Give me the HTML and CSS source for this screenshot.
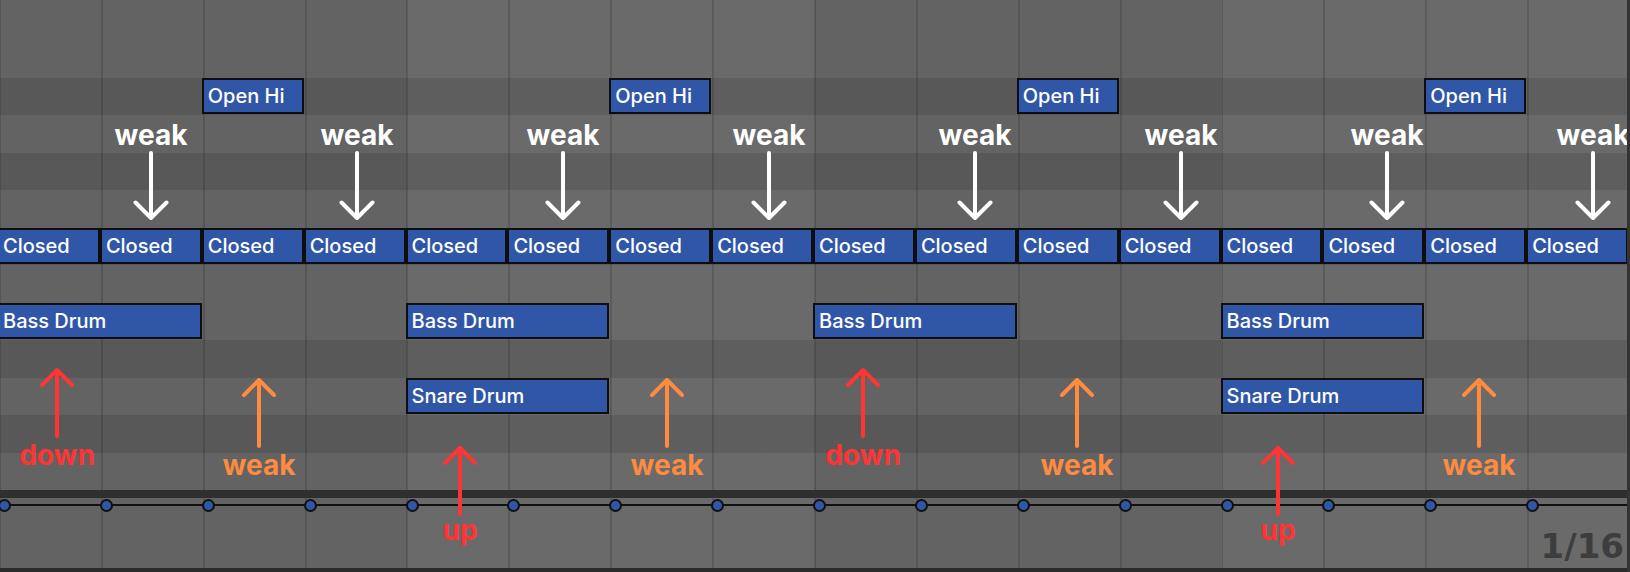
FILE: index.html
```html
<!DOCTYPE html>
<html lang="en">
<head>
<meta charset="utf-8">
<title>Drum pattern – piano roll</title>
<link rel="stylesheet" href="styles.css">
</head>
<body>
<div class="roll">
  <div class="lanes">
    <div class="note r-open gc3">Open Hi</div>
    <div class="note r-open gc7">Open Hi</div>
    <div class="note r-open gc11">Open Hi</div>
    <div class="note r-open gc15">Open Hi</div>

    <div class="note r-bass gc1 span2 cut">Bass Drum</div>
    <div class="note r-bass gc5 span2">Bass Drum</div>
    <div class="note r-bass gc9 span2">Bass Drum</div>
    <div class="note r-bass gc13 span2">Bass Drum</div>

    <div class="note r-snare gc5 span2">Snare Drum</div>
    <div class="note r-snare gc13 span2">Snare Drum</div>

    <div class="note r-closed cut">Closed</div>
    <div class="note r-closed">Closed</div>
    <div class="note r-closed">Closed</div>
    <div class="note r-closed">Closed</div>
    <div class="note r-closed">Closed</div>
    <div class="note r-closed">Closed</div>
    <div class="note r-closed">Closed</div>
    <div class="note r-closed">Closed</div>
    <div class="note r-closed">Closed</div>
    <div class="note r-closed">Closed</div>
    <div class="note r-closed">Closed</div>
    <div class="note r-closed">Closed</div>
    <div class="note r-closed">Closed</div>
    <div class="note r-closed">Closed</div>
    <div class="note r-closed">Closed</div>
    <div class="note r-closed">Closed</div>
  </div>

  <div class="timebar"></div>

  <div class="ruler">
    <div class="tick"><span class="dot"></span></div>
    <div class="tick"><span class="dot"></span></div>
    <div class="tick"><span class="dot"></span></div>
    <div class="tick"><span class="dot"></span></div>
    <div class="tick"><span class="dot"></span></div>
    <div class="tick"><span class="dot"></span></div>
    <div class="tick"><span class="dot"></span></div>
    <div class="tick"><span class="dot"></span></div>
    <div class="tick"><span class="dot"></span></div>
    <div class="tick"><span class="dot"></span></div>
    <div class="tick"><span class="dot"></span></div>
    <div class="tick"><span class="dot"></span></div>
    <div class="tick"><span class="dot"></span></div>
    <div class="tick"><span class="dot"></span></div>
    <div class="tick"><span class="dot"></span></div>
    <div class="tick"><span class="dot"></span></div>
  </div>

  <!-- annotations: white "weak" on the off-beat eighths -->
  <div class="weak-row">
    <div class="ann white"><span class="lbl">weak</span><svg viewBox="0 0 36 70"><path d="M18 2V67M2.5 51.5L18 67L33.5 51.5"/></svg></div>
    <div class="ann white"><span class="lbl">weak</span><svg viewBox="0 0 36 70"><path d="M18 2V67M2.5 51.5L18 67L33.5 51.5"/></svg></div>
    <div class="ann white"><span class="lbl">weak</span><svg viewBox="0 0 36 70"><path d="M18 2V67M2.5 51.5L18 67L33.5 51.5"/></svg></div>
    <div class="ann white"><span class="lbl">weak</span><svg viewBox="0 0 36 70"><path d="M18 2V67M2.5 51.5L18 67L33.5 51.5"/></svg></div>
    <div class="ann white"><span class="lbl">weak</span><svg viewBox="0 0 36 70"><path d="M18 2V67M2.5 51.5L18 67L33.5 51.5"/></svg></div>
    <div class="ann white"><span class="lbl">weak</span><svg viewBox="0 0 36 70"><path d="M18 2V67M2.5 51.5L18 67L33.5 51.5"/></svg></div>
    <div class="ann white"><span class="lbl">weak</span><svg viewBox="0 0 36 70"><path d="M18 2V67M2.5 51.5L18 67L33.5 51.5"/></svg></div>
    <div class="ann white"><span class="lbl">weak</span><svg viewBox="0 0 36 70"><path d="M18 2V67M2.5 51.5L18 67L33.5 51.5"/></svg></div>
  </div>

  <!-- annotations: beat accents -->
  <div class="beat red down1"><svg viewBox="0 0 36 70"><path d="M18 68V2M3 17L18 2L33 17"/></svg><span class="lbl">down</span></div>
  <div class="beat orange wk1"><svg viewBox="0 0 36 70"><path d="M18 68V2M3 17L18 2L33 17"/></svg><span class="lbl">weak</span></div>
  <div class="beat red up up1"><svg viewBox="0 0 36 70"><path d="M18 68V2M3 17L18 2L33 17"/></svg><span class="lbl">up</span></div>
  <div class="beat orange wk2"><svg viewBox="0 0 36 70"><path d="M18 68V2M3 17L18 2L33 17"/></svg><span class="lbl">weak</span></div>
  <div class="beat red down2"><svg viewBox="0 0 36 70"><path d="M18 68V2M3 17L18 2L33 17"/></svg><span class="lbl">down</span></div>
  <div class="beat orange wk3"><svg viewBox="0 0 36 70"><path d="M18 68V2M3 17L18 2L33 17"/></svg><span class="lbl">weak</span></div>
  <div class="beat red up up2"><svg viewBox="0 0 36 70"><path d="M18 68V2M3 17L18 2L33 17"/></svg><span class="lbl">up</span></div>
  <div class="beat orange wk4"><svg viewBox="0 0 36 70"><path d="M18 68V2M3 17L18 2L33 17"/></svg><span class="lbl">weak</span></div>

  <div class="grid-label">1/16</div>
</div>
</body>
</html>
```

FILE: styles.css
```css
html, body {
  margin: 0;
  padding: 0;
  background: #2a2a2a;
}

.roll {
  position: relative;
  width: 1630px;
  height: 572px;
  overflow: hidden;
  display: flex;
  flex-direction: column;
  background: #2a2a2a;
  font-family: Inter, "Liberation Sans", sans-serif;
}

.roll::after {
  content: "";
  position: absolute;
  top: 0;
  right: 0;
  width: 3px;
  height: 100%;
  background: #333333;
}

/* ---------- note lanes ---------- */
.lanes {
  height: 490px;
  flex: none;
  display: grid;
  grid-template-columns: repeat(16, 1fr);
  grid-template-rows: 40px repeat(12, 37.5px);
  background:
    linear-gradient(to bottom,
      transparent 0 77.5px,
      rgba(0,0,0,.11) 77.5px 115px,
      transparent 115px 152.5px,
      rgba(0,0,0,.11) 152.5px 190px,
      transparent 190px 227.5px,
      rgba(0,0,0,.11) 227.5px 265px,
      transparent 265px 340px,
      rgba(0,0,0,.11) 340px 377.5px,
      transparent 377.5px 415px,
      rgba(0,0,0,.11) 415px 452.5px,
      transparent 452.5px),
    repeating-linear-gradient(to right,
      rgba(0,0,0,.14) 0 1px,
      transparent 1px 100.875px,
      rgba(0,0,0,.14) 100.875px 101.875px),
    linear-gradient(to right,
      #636363 0 25%,
      #6a6a6a 25% 50%,
      #636363 50% 75%,
      #6a6a6a 75% 100%);
}

.note {
  box-sizing: border-box;
  height: 36px;
  align-self: start;
  margin: 0 2px 0 -2px;
  border: 2px solid #0e0e0e;
  background: #3056a8;
  color: #ffffff;
  font-size: 20px;
  font-weight: 500;
  display: flex;
  align-items: center;
  padding-left: 4px;
  white-space: nowrap;
  overflow: hidden;
}

.note.cut {
  border-left: 0;
  padding-left: 5px;
}

.r-open   { grid-row: 3; }
.r-closed { grid-row: 7; }
.r-bass   { grid-row: 9; }
.r-snare  { grid-row: 11; }

.gc1  { grid-column-start: 1; }
.gc3  { grid-column-start: 3; }
.gc5  { grid-column-start: 5; }
.gc7  { grid-column-start: 7; }
.gc9  { grid-column-start: 9; }
.gc11 { grid-column-start: 11; }
.gc13 { grid-column-start: 13; }
.gc15 { grid-column-start: 15; }
.span2 { grid-column-end: span 2; }

/* ---------- timeline ---------- */
.timebar {
  height: 8px;
  flex: none;
  background: #2f2f2f;
}

.ruler {
  height: 70px;
  flex: none;
  display: flex;
  background:
    linear-gradient(to bottom, transparent 0 6.5px, #111111 6.5px 8.5px, transparent 8.5px),
    repeating-linear-gradient(to right,
      rgba(0,0,0,.14) 0 1px,
      transparent 1px 100.875px,
      rgba(0,0,0,.14) 100.875px 101.875px),
    linear-gradient(to right,
      #636363 0 25%,
      #6a6a6a 25% 50%,
      #636363 50% 75%,
      #6a6a6a 75% 100%);
}

.tick {
  flex: 1;
}

.dot {
  display: block;
  box-sizing: border-box;
  width: 13px;
  height: 13px;
  margin: 1px 0 0 -2px;
  border: 2px solid #111111;
  border-radius: 50%;
  background: #3056a8;
}

/* ---------- annotations ---------- */
.weak-row {
  position: absolute;
  top: 121px;
  left: 48px;
  display: flex;
}

.ann {
  width: 206px;
  flex: none;
  display: flex;
  flex-direction: column;
  align-items: center;
  gap: 2px;
}

.lbl {
  display: block;
  font-family: Inter, "Liberation Sans", sans-serif;
  font-size: 28px;
  line-height: 28px;
  font-weight: 700;
}

.ann svg,
.beat svg {
  display: block;
  width: 36px;
  height: 70px;
  fill: none;
  stroke: currentColor;
  stroke-width: 4;
  stroke-linecap: round;
  stroke-linejoin: round;
}

.white { color: #ffffff; }
.red { color: #ff3434; }
.orange { color: #ff8b40; }

.beat {
  position: absolute;
  width: 120px;
  margin-left: -60px;
  display: flex;
  flex-direction: column;
  align-items: center;
  gap: 3px;
}

.beat.up .lbl { margin-top: -3px; }

.down1 { left: 57px;   top: 368px; }
.wk1   { left: 259px;  top: 378px; }
.up1   { left: 460px;  top: 446px; }
.wk2   { left: 667px;  top: 378px; }
.down2 { left: 863px;  top: 368px; }
.wk3   { left: 1077px; top: 378px; }
.up2   { left: 1278px; top: 446px; }
.wk4   { left: 1479px; top: 378px; }

.grid-label {
  position: absolute;
  right: 6px;
  bottom: 9px;
  font-family: "DejaVu Sans", "Liberation Sans", sans-serif;
  font-weight: 700;
  font-size: 34px;
  line-height: 34px;
  color: #3d3d3d;
}
```
